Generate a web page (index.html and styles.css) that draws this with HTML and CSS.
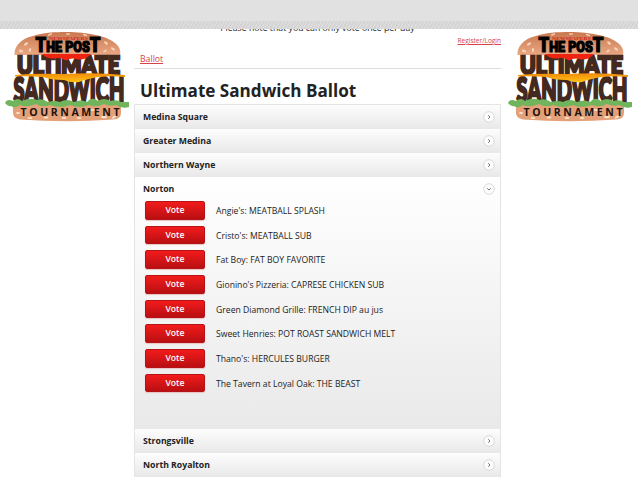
FILE: index.html
```html
<!DOCTYPE html>
<html lang="en">
<head>
    <meta charset="UTF-8">
    <title>Ultimate Sandwich Ballot</title>
    <link rel="stylesheet" href="styles.css">
</head>
<body>
<div class="header"></div>
<div class="page">
    <div class="side">
        <svg class="logo" viewBox="0 0 130 94">
            <defs>
                <linearGradient id="bun" x1="0" y1="0" x2="0" y2="1">
                    <stop offset="0" stop-color="#c97850"/>
                    <stop offset="1" stop-color="#e9a883"/>
                </linearGradient>
                <linearGradient id="cheese" x1="0" y1="0" x2="0" y2="1">
                    <stop offset="0" stop-color="#f08a0c"/>
                    <stop offset="1" stop-color="#ffc414"/>
                </linearGradient>
            </defs>
            <g id="burger">
                <!-- top bun -->
                <path fill="url(#bun)" d="M14.500 25C14 17 20 9 33 6C43 2.500 54 2 67 2C87 2 107 6 115 13C120 17 121 21 120 25Z"/>
                <g fill="#f6d3b6">
                    <ellipse cx="26" cy="14" rx="2.300" ry="1.200" transform="rotate(-30 26 14)"/>
                    <ellipse cx="21" cy="21" rx="2.300" ry="1.200" transform="rotate(20 21 21)"/>
                    <ellipse cx="30" cy="20" rx="1.200" ry="2"/>
                    <ellipse cx="50" cy="4.500" rx="2.300" ry=".8" transform="rotate(-20 50 4.500)"/>
                    <ellipse cx="68" cy="4" rx="2.300" ry=".8"/>
                    <ellipse cx="85" cy="5" rx="2.300" ry=".8" transform="rotate(20 85 5)"/>
                    <ellipse cx="106" cy="13" rx="2.300" ry="1.200" transform="rotate(40 106 13)"/>
                    <ellipse cx="113" cy="19" rx="2.300" ry="1.200" transform="rotate(30 113 19)"/>
                    <ellipse cx="105" cy="21" rx="2" ry="1" transform="rotate(-30 105 21)"/>
                </g>
                <!-- bottom bun -->
                <path fill="#e4a078" d="M13 74H121V83Q121 89 113 89.500Q67 93 20 89.500Q13 88 13 83Z"/>
                <g fill="#fbe3ca">
                    <ellipse cx="18" cy="83" rx="2" ry="1"/>
                    <ellipse cx="30" cy="88" rx="2.500" ry="1.100"/>
                    <ellipse cx="46" cy="87.500" rx="2.500" ry="1.100"/>
                    <ellipse cx="54" cy="79" rx="2.500" ry="1.100" transform="rotate(25 54 79)"/>
                    <ellipse cx="64" cy="88" rx="2.500" ry="1.100"/>
                    <ellipse cx="79" cy="88" rx="2.500" ry="1.100"/>
                    <ellipse cx="93" cy="80" rx="2.500" ry="1.100"/>
                    <ellipse cx="104" cy="87" rx="3" ry="1.200"/>
                    <ellipse cx="114" cy="87" rx="2.500" ry="1.100" transform="rotate(-30 114 87)"/>
                </g>
                <!-- meat lettering -->
                <g class="meat">
                    <text x="17" y="43.500" font-size="25" textLength="103" lengthAdjust="spacingAndGlyphs">ULTIMATE</text>
                    <text x="13.500" y="72" font-size="35" textLength="111" lengthAdjust="spacingAndGlyphs">SANDWICH</text>
                </g>
                <!-- tomato -->
                <path fill="#ef2410" d="M42 24H91Q86 30 78 29.500Q72 27 66 30.500Q60 27 54 28.500Q47 29 42 24Z"/>
                <!-- cheese -->
                <path fill="url(#cheese)" d="M15 45Q35 43 64 44Q95 42 125 45V47Q105 45 93 48Q84 50 79 52Q71 53 64 50Q51 50 43 47Q28 46 15 46.500Z"/>
                <!-- lettuce -->
                <path fill="#70b45c" d="M5 73Q7 68 13 71Q18 67 22 71Q30 67 37 70Q42 68 48 72Q55 70 60 72Q67 68 74 72Q81 69 87 72Q92 66 98 71Q104 67 110 71Q117 69 121 72L129 72V77Q122 79 116 75Q110 77 104 74Q96 78 89 75Q78 79 70 75Q60 79 50 75Q42 78 36 74Q26 78 20 75Q15 79 11 76Q8 77 5 73Z"/>
                <text class="tour" x="20.500" y="86" textLength="99">TOURNAMENT</text>
                <text class="post" x="35.500" y="22" textLength="65" lengthAdjust="spacingAndGlyphs"><tspan font-size="19.500">T</tspan>HE POS<tspan font-size="19.500">T</tspan></text>
                <text class="news" x="49" y="10" textLength="39" lengthAdjust="spacingAndGlyphs">NEWSPAPERS</text>
            </g>
        </svg>
    </div>
    <div class="content">
        <p class="notice">Please note that you can only vote once per day</p>
        <div class="login"><a href="#">Register/Login</a></div>
        <div class="crumbs"><a href="#">Ballot</a></div>
        <h1>Ultimate Sandwich Ballot</h1>
        <div class="accordion">
            <div class="bar">Medina Square <svg class="arrow" viewBox="0 0 12 12"><circle cx="6" cy="6" r="5.300"/><path d="M5.200 4.200L7 6L5.200 7.800"/></svg></div>
            <div class="bar">Greater Medina <svg class="arrow" viewBox="0 0 12 12"><circle cx="6" cy="6" r="5.300"/><path d="M5.200 4.200L7 6L5.200 7.800"/></svg></div>
            <div class="bar">Northern Wayne <svg class="arrow" viewBox="0 0 12 12"><circle cx="6" cy="6" r="5.300"/><path d="M5.200 4.200L7 6L5.200 7.800"/></svg></div>
            <div class="open">
                <div class="bar">Norton <svg class="arrow" viewBox="0 0 12 12"><circle cx="6" cy="6" r="5.300"/><path d="M4.200 5.300L6 7L7.800 5.300"/></svg></div>
                <ul>
                    <li><span class="vote">Vote</span>Angie's: MEATBALL SPLASH</li>
                    <li><span class="vote">Vote</span>Cristo's: MEATBALL SUB</li>
                    <li><span class="vote">Vote</span>Fat Boy: FAT BOY FAVORITE</li>
                    <li><span class="vote">Vote</span>Gionino's Pizzeria: CAPRESE CHICKEN SUB</li>
                    <li><span class="vote">Vote</span>Green Diamond Grille: FRENCH DIP au jus</li>
                    <li><span class="vote">Vote</span>Sweet Henries: POT ROAST SANDWICH MELT</li>
                    <li><span class="vote">Vote</span>Thano's: HERCULES BURGER</li>
                    <li><span class="vote">Vote</span>The Tavern at Loyal Oak: THE BEAST</li>
                </ul>
            </div>
            <div class="bar">Strongsville <svg class="arrow" viewBox="0 0 12 12"><circle cx="6" cy="6" r="5.300"/><path d="M5.200 4.200L7 6L5.200 7.800"/></svg></div>
            <div class="bar">North Royalton <svg class="arrow" viewBox="0 0 12 12"><circle cx="6" cy="6" r="5.300"/><path d="M5.200 4.200L7 6L5.200 7.800"/></svg></div>
        </div>
    </div>
    <div class="side right">
        <svg class="logo" viewBox="0 0 130 94"><use href="#burger"/></svg>
    </div>
</div>
</body>
</html>
```
FILE: styles.css
```css
*{
    margin:0;
    padding:0;
    box-sizing: border-box;
}
ul{
    list-style: none;
}
body{
    height:479px;
    overflow: hidden;
    background: #fff;
    color: #222;
    font-family: "Open Sans", sans-serif;
}
a{
    color: #d8434a;
}
.header{
    height:29px;
    background: repeating-linear-gradient(120deg, #d3d3d3 0, #d3d3d3 1.5px, #dddddd 1.5px, #dddddd 3px) 0 21px / 100% 8px no-repeat #e1e1e1;
}
.page{
    display: flex;
    height:450px;
    overflow: hidden;
}
.side{
    width:134px;
    padding-top:1px;
}
.side.right{
    padding-left:2px;
}
.logo{
    display: block;
    width:130px;
    height:94px;
}
.meat{
    fill: #44291f;
    stroke: #44291f;
    stroke-width: 2.6;
    font-family: Lato, sans-serif;
    font-weight: 900;
}
.tour{
    font-size: 10.5px;
    font-weight: 700;
    fill: #21130c;
}
.news{
    font-family: "Liberation Serif", serif;
    font-size: 5px;
    font-weight: 700;
    fill: #d5261c;
}
.post{
    font-family: Roboto, sans-serif;
    font-size: 14.5px;
    font-weight: 900;
    fill: #000;
    stroke: #000;
    stroke-width: 1.2;
}
.content{
    width:367px;
}
.notice{
    height:12px;
    margin-top:-7px;
    line-height: 12px;
    font-size: 8.75px;
    text-align: center;
}
.login{
    height:15px;
    line-height: 14px;
    font-size: 6.5px;
    text-align: right;
}
.crumbs{
    height:20px;
    padding-left:6px;
    border-bottom:solid 1px #ddd;
    line-height: 20px;
    font-size: 8.7px;
}
h1{
    height:35px;
    padding-left:6px;
    line-height: 43px;
    font-size: 17.1px;
}
.accordion{
    height:373px;
    border:solid 1px #e4e4e4;
    border-bottom:none;
}
.bar{
    display: flex;
    align-items: center;
    justify-content: space-between;
    height:24px;
    padding:0 5px 1px 8px;
    background: linear-gradient(#fdfdfd, #e8e8e8);
    font-size: 8.7px;
    font-weight: 700;
}
.arrow{
    width:12px;
    height:12px;
    fill: #fcfcfc;
    stroke: #d2d2d2;
    stroke-width: .8;
}
.arrow path{
    fill: none;
    stroke: #777;
    stroke-width: 1;
}
.open{
    height:252px;
    background: linear-gradient(#fff, #e9e9e9);
}
.open .bar{
    padding-bottom:0;
    background: none;
}
.open li{
    display: flex;
    height:18.5px;
    margin-bottom:6.2px;
    padding-left:10px;
    font-size: 8.65px;
    line-height: 20px;
}
.vote{
    width:60px;
    height:18.5px;
    margin-right:11px;
    border:solid 1px #b51316;
    border-radius: 2px;
    background: linear-gradient(#f21b1c, #b90f12);
    box-shadow: 0 1px 1px #e9c0c0;
    color: #fff;
    font-weight: 600;
    line-height: 17px;
    text-align: center;
}
```
